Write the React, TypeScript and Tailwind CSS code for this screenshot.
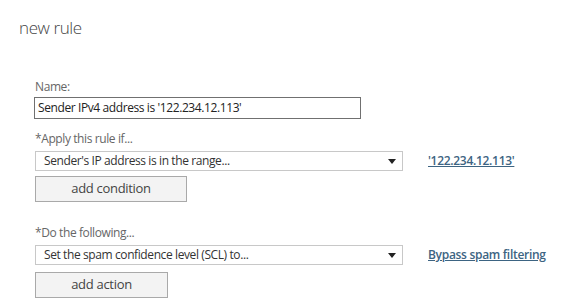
import React from "react";

const font = { fontFamily: '"Segoe UI", "Open Sans", "Liberation Sans", sans-serif' };

function Arrow() {
  return (
    <svg width="8" height="5" viewBox="0 0 8 5" className="shrink-0">
      <path d="M0 0 H8 L4 5 Z" fill="#222" />
    </svg>
  );
}

function Select({ text }: { text: string }) {
  return (
    <div className="flex h-[20px] w-[368px] items-center justify-between border border-[#c8c8c8] bg-white pl-[8px] pr-[6px] text-[12px] tracking-[-0.4px] text-[#333]">
      <span>{text}</span>
      <Arrow />
    </div>
  );
}

function Button({ text, w }: { text: string; w: string }) {
  return (
    <div className={`flex h-[26px] ${w} items-center justify-center border border-[#a9a9a9] bg-[#f3f3f3] text-[13px] tracking-[-0.3px] text-[#444]`}>
      {text}
    </div>
  );
}

export default function App() {
  return (
    <div className="h-[302px] w-[574px] bg-white" style={font}>
      <div className="pl-[19px] pt-[17px] text-[17px] font-light leading-[22px] tracking-[-0.4px] text-[#444]">new rule</div>
      <div className="flex flex-col pl-[35px] pt-[40px]">
        <div className="text-[12px] leading-[16px] tracking-[-0.4px] text-[#666]">Name:</div>
        <div className="mt-[2px] flex h-[22px] w-[327px] -translate-x-[1px] items-center border border-[#707070] pl-[3px] text-[12px] tracking-[-0.4px] text-[#222]">
          Sender IPv4 address is '122.234.12.113'
        </div>
        <div className="mt-[12px] text-[12px] leading-[16px] tracking-[-0.4px] text-[#666]">*Apply this rule if...</div>
        <div className="mt-[4px] flex items-center gap-[25px]">
          <Select text="Sender's IP address is in the range..." />
          <span className="text-[12px] font-semibold tracking-[-0.3px] text-[#3d6482] underline">'122.234.12.113'</span>
        </div>
        <div className="mt-[5px]">
          <Button text="add condition" w="w-[152px]" />
        </div>
        <div className="mt-[23px] text-[12px] leading-[16px] tracking-[-0.4px] text-[#666]">*Do the following...</div>
        <div className="mt-[4px] flex items-center gap-[25px]">
          <Select text="Set the spam confidence level (SCL) to..." />
          <span className="text-[12px] font-semibold tracking-[-0.3px] text-[#3d6482] underline">Bypass spam filtering</span>
        </div>
        <div className="mt-[7px]">
          <Button text="add action" w="w-[133px]" />
        </div>
      </div>
    </div>
  );
}
